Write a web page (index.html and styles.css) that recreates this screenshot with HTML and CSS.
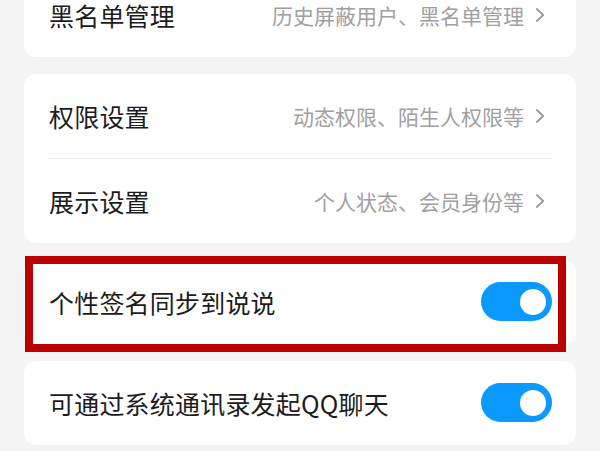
FILE: index.html
```html
<!DOCTYPE html>
<html lang="zh-CN">
<head>
<meta charset="utf-8">
<title>设置</title>
<link rel="stylesheet" href="styles.css">
</head>
<body>
<div class="page">
  <section class="card card-first">
    <div class="row">
      <span class="title">黑名单管理</span>
      <span class="detail">历史屏蔽用户、黑名单管理<svg class="chev" viewBox="0 0 10 14" width="10" height="14"><path d="M1.8 1 L8.2 7 L1.8 13" fill="none" stroke="#999999" stroke-width="1.8" stroke-linecap="round" stroke-linejoin="round"/></svg></span>
    </div>
  </section>

  <section class="card">
    <div class="row">
      <span class="title">权限设置</span>
      <span class="detail">动态权限、陌生人权限等<svg class="chev" viewBox="0 0 10 14" width="10" height="14"><path d="M1.8 1 L8.2 7 L1.8 13" fill="none" stroke="#999999" stroke-width="1.8" stroke-linecap="round" stroke-linejoin="round"/></svg></span>
    </div>
    <div class="sep"></div>
    <div class="row">
      <span class="title">展示设置</span>
      <span class="detail">个人状态、会员身份等<svg class="chev" viewBox="0 0 10 14" width="10" height="14"><path d="M1.8 1 L8.2 7 L1.8 13" fill="none" stroke="#999999" stroke-width="1.8" stroke-linecap="round" stroke-linejoin="round"/></svg></span>
    </div>
  </section>

  <section class="card card-marked">
    <div class="row">
      <span class="title">个性签名同步到说说</span>
      <span class="toggle on"><span class="knob"></span></span>
    </div>
    <div class="highlight"></div>
  </section>

  <section class="card">
    <div class="row">
      <span class="title">可通过系统通讯录发起QQ聊天</span>
      <span class="toggle on"><span class="knob"></span></span>
    </div>
  </section>
</div>
</body>
</html>
```

FILE: styles.css
```css
html, body {
  margin: 0;
  padding: 0;
  background: #f4f4f4;
  height: 100%;
  overflow: hidden;
}

body {
  font-family: "Noto Sans CJK SC", "Noto Sans", sans-serif;
}

.page {
  display: flex;
  flex-direction: column;
  gap: 17px;
  padding: 0 24px;
}

.card {
  background: #ffffff;
  border-radius: 12px;
  padding: 0 24px 0 25px;
  position: relative;
}

.card-first {
  margin-top: -27px;
}

.row {
  height: 84px;
  display: flex;
  align-items: center;
  justify-content: space-between;
}

.title {
  font-size: 25px;
  color: #1c1c1c;
  letter-spacing: 0.2px;
  line-height: 1;
  padding-top: 1px;
}

.detail {
  display: flex;
  align-items: center;
  font-size: 21px;
  color: #a0a0a0;
  line-height: 1;
}

.chev {
  margin-left: 11px;
  margin-right: 7px;
  margin-top: 0;
}

.sep {
  height: 1px;
  background: #efefef;
}

.toggle {
  width: 71px;
  height: 39px;
  border-radius: 20px;
  background: #0a99fe;
  display: flex;
  align-items: center;
  justify-content: flex-end;
  padding-right: 6px;
  box-sizing: border-box;
  margin-top: -1px;
}

.knob {
  width: 26px;
  height: 26px;
  border-radius: 50%;
  background: #ffffff;
}

.highlight {
  position: absolute;
  left: 1px;
  top: -4px;
  width: 541px;
  height: 96px;
  border: 8px solid #bb0000;
  box-sizing: border-box;
  pointer-events: none;
}
```
